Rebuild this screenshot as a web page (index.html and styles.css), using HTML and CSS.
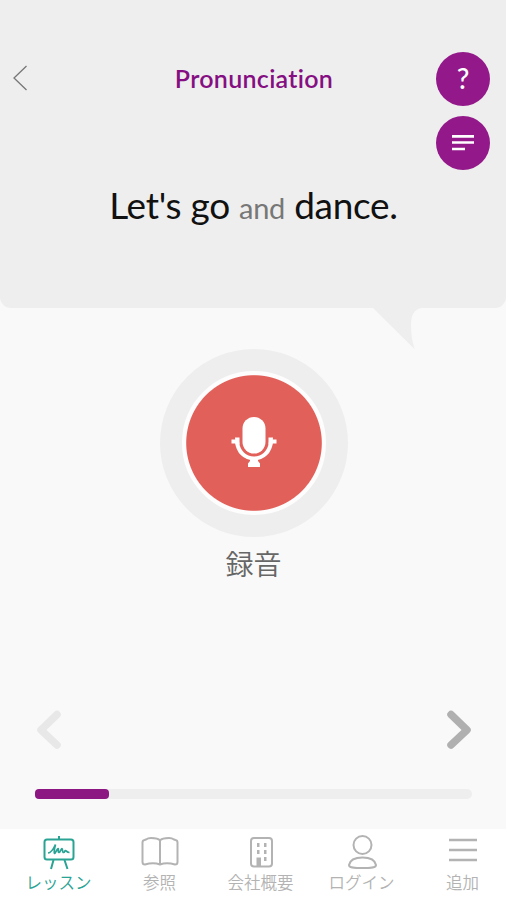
FILE: index.html
```html
<!DOCTYPE html>
<html lang="ja">
<head>
<meta charset="utf-8">
<title>Pronunciation</title>
<link rel="stylesheet" href="styles.css">
</head>
<body>
<div class="app">
  <header class="bubble">
    <div class="topbar">
      <svg class="back" width="16" height="28" viewBox="0 0 16 28"><path d="M14.500 2 2 14l12.500 12" /></svg>
      <h1 class="title">Pronunciation</h1>
      <div class="actions">
        <button class="round help">?</button>
        <button class="round"><svg width="22" height="18" viewBox="0 0 22 18"><path d="M0 2.300h22M0 8.500h22M0 15h13" /></svg></button>
      </div>
    </div>
    <p class="sentence"><span>Let's go</span> <span class="weak">and</span> <span>dance.</span></p>
    <svg class="tail" width="50" height="43" viewBox="0 0 50 43"><path d="M0 0H50V1C42 2 39 8 39 18Q39 31 42.500 42Z" /></svg>
  </header>
  <main class="practice">
    <button class="record">
      <svg width="46" height="50" viewBox="0 0 46 50">
        <rect x="11.500" y="0" width="23" height="36.500" rx="11.500" />
        <path class="cradle" d="M0.500 24.500H6C7 35 14 41.500 23 41.500S39 35 40 24.500H45.500" />
        <path d="M4 20.500h4.500v7H4.500zM37.500 20.500H42l-.5 7h-4zM19 42h8v2l2 2.500v3.500H17v-3.500l2-2.500z" />
      </svg>
    </button>
    <div class="caption">録音</div>
    <div class="pager">
      <svg class="prev" width="26" height="40" viewBox="0 0 26 40"><path d="M21 4.500 5 20l16 15" /></svg>
      <svg class="next" width="26" height="40" viewBox="0 0 26 40"><path d="M5 4.500l16 15.500L5 35" /></svg>
    </div>
    <div class="progress"><div class="bar"></div></div>
  </main>
  <nav class="tabs">
    <a class="tab active">
      <svg width="40" height="36" viewBox="0 0 40 36"><rect x="5.500" y="4.500" width="29" height="20" rx="2.500"/><path d="M20 1v3M14.500 25 12 34M25.500 25l3 9"/><path class="thin" d="M9 18C12 18 14 15 16.500 9.500c-1 4-2 8-1 9 1 0 2.500-5 3.500-5s-.5 4 1 4 2-4 3-4 0 4 1.500 4 1-2 2-2 1 2 4 2"/></svg>
      <span>レッスン</span>
    </a>
    <a class="tab">
      <svg width="40" height="36" viewBox="0 0 40 36"><path d="M20 5.500Q18 3 11 3 8 3 6 4.500L4.500 5Q2.500 5.300 2.500 7.500V27Q2.500 29.500 5 29.500C10 28 16 28 20 29.500 24 28 30 28 35 29.500Q37.500 29.500 37.500 27V7.500Q37.500 5.300 35.500 5L34 4.500Q32 3 29 3 22 3 20 5.500ZM20 5.500V29"/></svg>
      <span>参照</span>
    </a>
    <a class="tab">
      <svg width="40" height="36" viewBox="0 0 40 36"><rect x="10" y="3" width="21" height="28.500" rx="3"/><path class="solid" d="M16 8h2.500v4H16zM23 8h2.500v4H23zM16 15h2.500v4H16zM23 15h2.500v4H23zM15.500 22.500h4.500v8.500h-4.500zM23 22h2.500v4H23z"/></svg>
      <span>会社概要</span>
    </a>
    <a class="tab">
      <svg width="40" height="36" viewBox="0 0 40 36"><circle cx="20.500" cy="10" r="9"/><path d="M7 30C8 25 12 22.500 20.500 22.500S33 25 34 30C34 32.500 30 33 20.500 33S7 32.500 7 30Z"/></svg>
      <span>ログイン</span>
    </a>
    <a class="tab">
      <svg width="40" height="36" viewBox="0 0 40 36"><path class="menu" d="M6 5h28M6 15h28M6 25h28"/></svg>
      <span>追加</span>
    </a>
  </nav>
</div>
</body>
</html>
```

FILE: styles.css
```css
* { box-sizing: border-box; }
body { margin: 0; background: #f9f9f9; font-family: Lato, "Noto Sans CJK JP", sans-serif; }
button { border: 0; padding: 0; font-family: inherit; }
svg { display: block; fill: none; }
.app { display: flex; flex-direction: column; height: 900px; overflow: hidden; }
.bubble { position: relative; flex: 0 0 308px; padding-top: 52px; background: #eee; border-radius: 0 0 11px 11px; }
.topbar { display: grid; grid-template-columns: 70px 1fr 70px; height: 118px; }
.back { margin: 12px 0 0 12px; stroke: #777; stroke-width: 1.300; }
.title { margin: 10px 0 0; padding-left: 2px; text-align: center; color: #850f82; font-size: 25px; line-height: 32px; font-weight: 600; letter-spacing: .3px; }
.actions { display: flex; flex-direction: column; gap: 10px; }
.round { display: flex; align-items: center; justify-content: center; width: 54px; height: 54px; border-radius: 50%; background: #93198a; color: #fff; }
.round svg { stroke: #fff; stroke-width: 2.700; margin-top: -1px; }
.help { padding-bottom: 3px; font-size: 28px; font-weight: 500; }
.sentence { margin: 11px 0 0; padding-left: 1px; text-align: center; color: #111; font-size: 37px; line-height: 48px; letter-spacing: -.3px; white-space: nowrap; }
.weak { color: #777; font-size: 29px; }
.tail { position: absolute; left: 372px; top: 307px; fill: #eee; }
.practice { flex: 1; display: flex; flex-direction: column; align-items: center; padding-top: 41px; }
.record { display: flex; align-items: center; justify-content: center; width: 188px; height: 188px; margin-left: 1px; border: 22px solid #eee; border-radius: 50%; background: radial-gradient(circle, #e2605a 67.300px, #fdfdfd 68.300px); }
.record svg { fill: #fff; margin-top: -3px; }
.record .cradle { fill: none; stroke: #fff; stroke-width: 4; }
.caption { margin: 6px 0 0 1px; color: #666; font-size: 28px; line-height: 40px; font-weight: 350; font-family: "Noto Sans CJK JP", sans-serif; }
.pager { display: flex; justify-content: space-between; width: 436px; margin: 127px 0 0 1px; }
.pager svg { stroke-width: 7.500; stroke-linecap: round; stroke-linejoin: round; }
.prev { stroke: #e8e8e8; }
.next { stroke: #b0b0b0; }
.progress { width: 437px; height: 10px; margin-top: 39px; border-radius: 5px; background: #eee; }
.bar { width: 74px; height: 10px; border-radius: 4px; background: #8c1682; }
.tabs { display: flex; flex: 0 0 71px; padding-left: 8px; background: #fff; }
.tab { flex: 0 0 101px; display: flex; flex-direction: column; align-items: center; padding-top: 6px; color: #b3b3b3; font: 350 16.500px/22px "Noto Sans CJK JP", sans-serif; }
.tab svg { stroke: currentColor; stroke-width: 2; }
.tab .thin { stroke-width: 1.700; }
.tab .solid { fill: currentColor; stroke: none; }
.tab .menu { stroke-width: 2.500; }
.active { color: #2aa394; }
```
